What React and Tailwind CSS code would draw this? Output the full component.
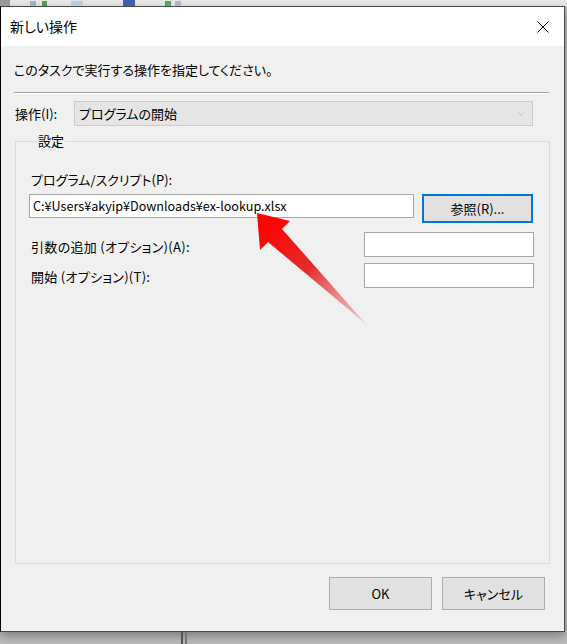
import { ChevronDown } from 'lucide-react'

const jp = "font-['Noto_Sans_CJK_JP',sans-serif] [font-feature-settings:'palt']"

function TextBox({ className = '', children }) {
  return (
    <div className={`bg-white border border-[#a6a6a6] flex items-center pl-[3px] text-[12.6px] ${className}`}>
      {children}
    </div>
  )
}

function Button({ className = '', focused = false, children }) {
  const border = focused ? 'border-2 border-[#0078d7]' : 'border border-[#adadad]'
  return (
    <button className={`bg-[#e1e1e1] ${border} flex items-center justify-center text-[13px] text-black ${className}`}>
      {children}
    </button>
  )
}

function Arrow() {
  return (
    <svg className="absolute left-0 top-0 pointer-events-none" width="567" height="644">
      <defs>
        <linearGradient id="arrowFill" x1="262" y1="222" x2="366" y2="324" gradientUnits="userSpaceOnUse">
          <stop offset="0" stopColor="#ff0000" />
          <stop offset="0.45" stopColor="#e42a2a" />
          <stop offset="1" stopColor="#e89a9a" stopOpacity="0.5" />
        </linearGradient>
      </defs>
      <polygon
        points="257,213 290,221 282,229 366,324 268,242 260,250"
        fill="url(#arrowFill)"
      />
    </svg>
  )
}

export default function App() {
  return (
    <div className={`relative w-[567px] h-[644px] overflow-hidden bg-[#bdbdbd] ${jp}`}>
      {/* background app strip */}
      <div className="h-[6px] bg-[#e9e9e9] flex items-end">
        <div className="w-[10px] h-[6px] bg-[#9a9a9a]" />
        <div className="ml-[20px] w-[6px] h-[5px] bg-[#9fb1c4]" />
        <div className="ml-[6px] w-[5px] h-[5px] bg-[#4aa14a]" />
        <div className="ml-[24px] w-[12px] h-[5px] bg-[#b8cde0]" />
        <div className="ml-[40px] w-[12px] h-[6px] bg-[#3d63b0]" />
        <div className="ml-[30px] w-[6px] h-[5px] bg-[#54a857]" />
        <div className="ml-[4px] w-[6px] h-[5px] bg-[#a9b9c9]" />
      </div>

      <div className="w-[565px] h-[626px] border border-[#4a4a4a] border-l-black flex flex-col bg-[#f0f0f0] shadow-[0_4px_10px_rgba(0,0,0,0.35)]">
        {/* title bar */}
        <div className="h-[39px] bg-white flex items-center justify-between pl-[9px] pr-[15px]">
          <span className="text-[14px] text-black">新しい操作</span>
          <svg width="12" height="12" viewBox="0 0 12 12">
            <path d="M0.5 0.5 L11.5 11.5 M11.5 0.5 L0.5 11.5" stroke="#000" strokeWidth="1" />
          </svg>
        </div>

        <div className="flex-1 flex flex-col">
          <p className="mt-[15px] pl-[13px] text-[13px] leading-[18px] text-black">
            このタスクで実行する操作を指定してください。
          </p>

          <div className="mt-[13px] ml-[13px] w-[535px] h-[2px] border-t border-[#a0a0a0] border-b border-b-white" />

          <div className="mt-[7px] flex items-center pl-[14px]">
            <span className="w-[59px] text-[13px] text-black">操作(I):</span>
            <div className="w-[459px] h-[25px] bg-[#e5e5e5] border border-[#cccccc] flex items-center justify-between pl-[4px] pr-[6px]">
              <span className="text-[13px] text-black">プログラムの開始</span>
              <ChevronDown size={10} strokeWidth={1.2} color="#9a9a9a" />
            </div>
          </div>

          <fieldset className="mt-[6px] ml-[14px] w-[535px] h-[432px] border border-[#dcdcdc] pl-[13px] pr-[15px]">
            <legend className="ml-[8px] px-[1px] text-[13px] leading-[18px] text-black">設定</legend>

            <div className="mt-[21px] pl-[2px] text-[13px] leading-[18px] text-black">
              プログラム/スクリプト(P):
            </div>

            <div className="mt-[5px] flex items-start">
              <TextBox className="w-[385px] h-[24px] text-black">
                C:¥Users¥akyip¥Downloads¥ex-lookup.xlsx
              </TextBox>
              <Button focused className="ml-[8px] w-[111px] h-[29px]">
                参照(R)...
              </Button>
            </div>

            <div className="mt-[9px] flex items-center justify-between">
              <span className="pl-[2px] pt-[4px] text-[13px] tracking-[0.3px] text-black">引数の追加 (オプション)(A):</span>
              <TextBox className="w-[170px] h-[25px]" />
            </div>

            <div className="mt-[6px] flex items-center justify-between">
              <span className="pl-[2px] pt-[2px] text-[13px] tracking-[0.3px] text-black">開始 (オプション)(T):</span>
              <TextBox className="w-[170px] h-[25px]" />
            </div>
          </fieldset>

          <div className="mt-[13px] flex justify-end gap-[10px] pr-[19px]">
            <Button className="w-[103px] h-[33px]">OK</Button>
            <Button className="w-[103px] h-[33px]">キャンセル</Button>
          </div>
        </div>
      </div>

      {/* desktop behind, below the dialog */}
      <div className="absolute left-[181px] top-[632px] w-[2px] h-[12px] bg-[#555]" />
      <div className="absolute left-[185px] top-[632px] w-[2px] h-[12px] bg-[#777]" />

      <Arrow />
    </div>
  )
}
